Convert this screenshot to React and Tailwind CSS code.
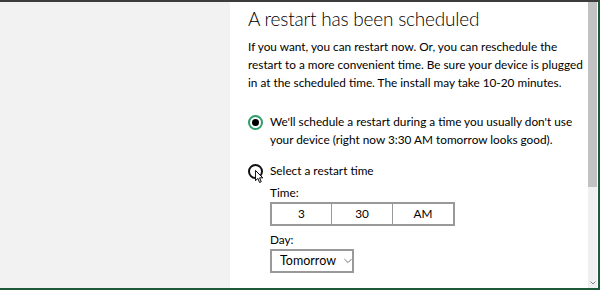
import React from "react";

function Cursor() {
  return (
    <svg
      className="absolute left-[7px] top-[8px]"
      width="9"
      height="14"
      viewBox="0 0 11 17"
    >
      <path
        d="M0.5 0.5 L0.5 13 L3.5 10.2 L5.6 15.2 L7.6 14.3 L5.6 9.5 L9.6 9.5 Z"
        fill="#fff"
        stroke="#000"
        strokeWidth="1.2"
        strokeLinejoin="round"
      />
    </svg>
  );
}

function Radio({ checked, children, cursor }) {
  return (
    <div className="flex items-start">
      <div className="relative w-[22px] h-[18px] flex items-center shrink-0">
        {checked ? (
          <div className="w-[15px] h-[15px] rounded-full border-2 border-[#2e9e6b] flex items-center justify-center">
            <div className="w-[7px] h-[7px] rounded-full bg-black" />
          </div>
        ) : (
          <div className="w-[15px] h-[15px] rounded-full border-2 border-[#111]" />
        )}
        {cursor && <Cursor />}
      </div>
      <div>{children}</div>
    </div>
  );
}

export default function App() {
  return (
    <div
      className="w-[600px] h-[290px] flex border-t-2 border-t-[#3c3c3c] border-r-2 border-r-[#1c5a3a] border-b-2 border-b-[#1c5a3a] overflow-hidden bg-white text-black whitespace-nowrap"
      style={{ fontFamily: 'Lato, "Noto Sans", sans-serif' }}
    >
      <div className="w-[230px] shrink-0 bg-[#f2f2f2]" />
      <div className="flex-1 min-w-0 pl-[18px] pt-[3px] text-[11.8px] leading-[18px]">
        <h1 className="text-[19px] leading-[28px] font-light tracking-[-0.2px]">
          A restart has been scheduled
        </h1>
        <p className="mt-[5px]">
          If you want, you can restart now. Or, you can reschedule the
          <br />
          restart to a more convenient time. Be sure your device is plugged
          <br />
          in at the scheduled time. The install may take 10-20 minutes.
        </p>
        <div className="mt-[21px]">
          <Radio checked>
            We'll schedule a restart during a time you usually don't use
            <br />
            your device (right now 3:30 AM tomorrow looks good).
          </Radio>
        </div>
        <div className="mt-[13px]">
          <Radio cursor>Select a restart time</Radio>
        </div>
        <div className="ml-[22px]">
          <div className="mt-[4px]">Time:</div>
          <div className="flex w-[185px] h-[24px] border-2 border-[#999]">
            <div className="w-[60px] flex items-center justify-center border-r border-[#999]">
              3
            </div>
            <div className="w-[61px] flex items-center justify-center border-r border-[#999]">
              30
            </div>
            <div className="flex-1 flex items-center justify-center">AM</div>
          </div>
          <div className="mt-[5px]">Day:</div>
          <div className="flex items-center w-[84px] h-[24px] border-2 border-[#999] pl-[8px] text-[12.5px]">
            <span>Tomorrow</span>
            <svg className="ml-[8px]" width="10" height="6" viewBox="0 0 10 6">
              <path d="M0.5 0.5 L5 5 L9.5 0.5" fill="none" stroke="#555" strokeWidth="1" />
            </svg>
          </div>
        </div>
      </div>
      <div className="w-[9px] shrink-0 mr-[1px] bg-[#f0f0f0] flex flex-col">
        <div className="h-[185px] bg-[#c2c2c2]" />
        <div className="flex-1" />
        <div className="h-[10px] flex items-center justify-center">
          <svg width="6" height="4" viewBox="0 0 6 4">
            <path d="M0.5 0.5 L3 3 L5.5 0.5" fill="none" stroke="#888" strokeWidth="1" />
          </svg>
        </div>
      </div>
    </div>
  );
}
